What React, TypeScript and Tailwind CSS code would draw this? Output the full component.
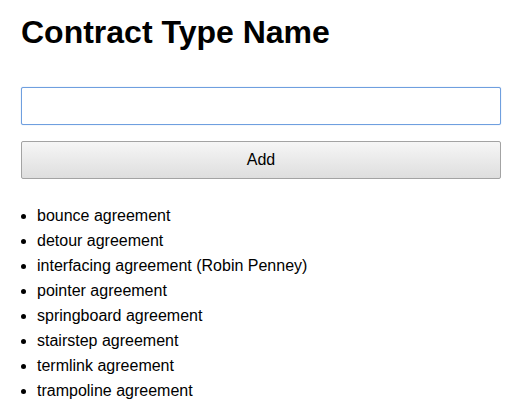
import React from 'react';

const contractTypes = [
  'bounce agreement',
  'detour agreement',
  'interfacing agreement (Robin Penney)',
  'pointer agreement',
  'springboard agreement',
  'stairstep agreement',
  'termlink agreement',
  'trampoline agreement',
];

const App: React.FC = () => {
  return (
    <div className="min-h-screen bg-white px-[21px] pt-[14px] font-['Liberation_Sans',Arial,sans-serif] text-black">
      <h1 className="text-[32px] leading-[37px] font-bold">Contract Type Name</h1>

      <input
        type="text"
        className="mt-[36px] block h-[38px] w-full rounded-[2px] border border-[#6f9fdf] bg-white px-2 text-base outline-none shadow-[0_0_1px_#8fb6ec]"
      />

      <button
        type="button"
        className="mt-[16px] block h-[38px] w-full rounded-[2px] border border-[#a3a3a3] bg-gradient-to-b from-[#f6f6f6] to-[#dedede] text-base text-black"
      >
        Add
      </button>

      <ul className="mt-[24px] list-disc pl-[16px] text-base leading-[25px]">
        {contractTypes.map((name) => (
          <li key={name}>{name}</li>
        ))}
      </ul>
    </div>
  );
};

export default App;
